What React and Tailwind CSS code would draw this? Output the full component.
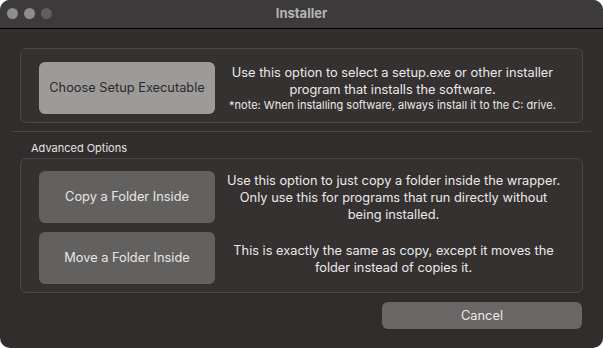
import React from "react";

const font = { fontFamily: "Inter, 'Noto Sans', 'Liberation Sans', sans-serif" };

function OptionRow({ label, children }) {
  return (
    <div className="flex items-center">
      <button className="w-[176px] h-[52px] shrink-0 rounded-[6px] text-[12.8px] bg-[#636160] text-[#e8e6e6]">
        {label}
      </button>
      <div className="flex-1 text-center text-[#ebe9e9] text-[12.8px] leading-[17px] pl-[8px] mt-[1px]">
        {children}
      </div>
    </div>
  );
}

export default function App() {
  return (
    <div className="w-[603px] h-[348px] bg-white" style={font}>
      <div className="w-full h-full rounded-[10px] overflow-hidden bg-[#312d2c] flex flex-col">
        {/* Title bar */}
        <div className="relative h-[29px] bg-[#3c3a3b] border-b border-black flex items-center justify-center shrink-0">
          <div className="absolute left-[7px] top-[8px] flex gap-[6px]">
            <span className="w-[11px] h-[11px] rounded-full bg-[#8e8c8c]"></span>
            <span className="w-[11px] h-[11px] rounded-full bg-[#8e8c8c]"></span>
            <span className="w-[11px] h-[11px] rounded-full bg-[#5f5d5d]"></span>
          </div>
          <span className="text-[13px] font-bold text-[#b5b3b3]">Installer</span>
        </div>

        {/* Main option */}
        <div className="mt-[19px] mx-[20px] h-[75px] rounded-[6px] border border-[#4a4746] bg-[#343130] px-[18px] pt-[13px]">
          <div className="flex items-start w-full">
            <button className="w-[176px] h-[52px] shrink-0 rounded-[6px] text-[12.8px] bg-[#9d9b9a] text-[#2b2a2a]">
              Choose Setup Executable
            </button>
            <div className="flex-1 text-center text-[#ebe9e9] pl-[6px] pt-[2px]">
              <div className="text-[12.8px] leading-[17px]">
                Use this option to select a setup.exe or other installer program that installs the software.
              </div>
              <div className="text-[11px] leading-[14px] whitespace-nowrap">
                *note: When installing software, always install it to the C: drive.
              </div>
            </div>
          </div>
        </div>

        <div className="mt-[8px] mx-[12px] h-px bg-[#4a4746]"></div>

        <div className="ml-[31px] mt-[9px] text-[11px] leading-[14px] text-[#e4e2e2]">Advanced Options</div>

        {/* Advanced options */}
        <div className="mt-[3px] mx-[20px] h-[135px] rounded-[6px] border border-[#4a4746] bg-[#343130] px-[18px] pt-[12px] flex flex-col gap-[9px]">
          <OptionRow label="Copy a Folder Inside">
            Use this option to just copy a folder inside the wrapper. Only use this for programs that run directly without being installed.
          </OptionRow>
          <OptionRow label="Move a Folder Inside">
            This is exactly the same as copy, except it moves the folder instead of copies it.
          </OptionRow>
        </div>

        <div className="mt-[9px] mr-[21px] flex justify-end">
          <button className="w-[200px] h-[27px] rounded-[6px] bg-[#696665] text-[12.8px] text-[#ebe9e9]">
            Cancel
          </button>
        </div>
      </div>
    </div>
  );
}
